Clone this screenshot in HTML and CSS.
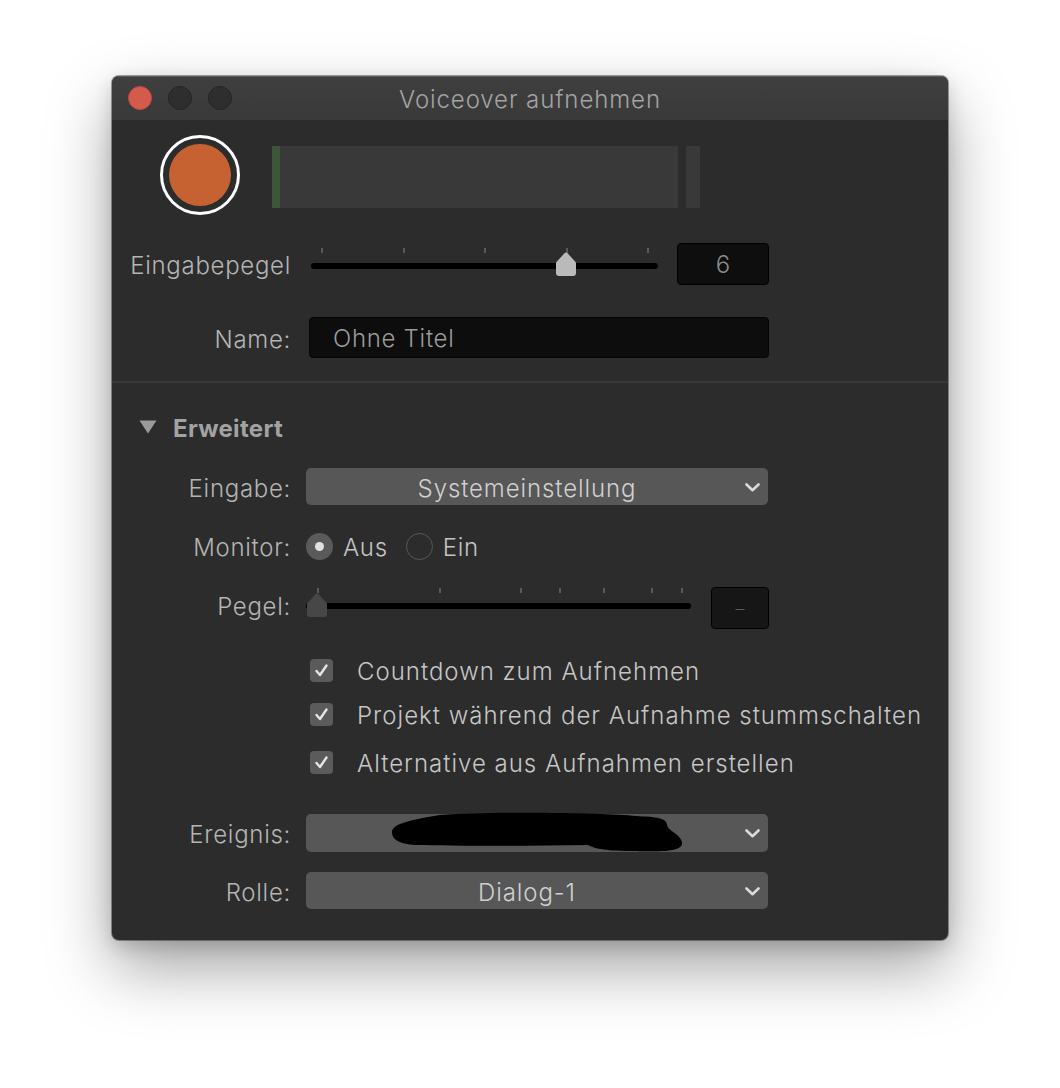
FILE: index.html
```html
<!DOCTYPE html>
<html lang="de">
<head>
<meta charset="utf-8">
<title>Voiceover aufnehmen</title>
<link rel="stylesheet" href="styles.css">
</head>
<body>
<div class="window">
  <div class="titlebar">
    <div class="lights">
      <span class="light red"></span>
      <span class="light"></span>
      <span class="light"></span>
    </div>
    <div class="title">Voiceover aufnehmen</div>
    <div class="lights-spacer"></div>
  </div>

  <div class="content">
    <div class="record-row">
      <div class="rec-ring"><div class="rec-dot"></div></div>
      <div class="meter">
        <div class="meter-main"><span class="meter-green"></span></div>
        <div class="meter-peak"></div>
      </div>
    </div>

    <div class="row row-gain">
      <div class="label">Eingabepegel</div>
      <div class="slider slider-gain">
        <span class="tick" style="left:10px"></span>
        <span class="tick" style="left:92px"></span>
        <span class="tick" style="left:173px"></span>
        <span class="tick" style="left:255px"></span>
        <span class="tick" style="left:336px"></span>
        <div class="track"></div>
        <svg class="thumb thumb-light" style="left:244px" width="22" height="24" viewBox="0 0 22 24"><path d="M1 10.5 L9.5 1.2 Q11 -0.2 12.5 1.2 L21 10.5 V21 Q21 24 18 24 H4 Q1 24 1 21 Z"/></svg>
      </div>
      <div class="valuebox valuebox-gain">6</div>
    </div>

    <div class="row row-name">
      <div class="label">Name:</div>
      <div class="textfield"><span class="tf-text">Ohne Titel</span></div>
    </div>

    <div class="separator"></div>

    <div class="disclosure">
      <svg class="tri" width="18" height="14" viewBox="0 0 18 14"><path d="M0.5 0.5 H17.5 L9 13.5 Z"/></svg>
      <span class="disclosure-text">Erweitert</span>
    </div>

    <div class="row row-select row-input">
      <div class="label">Eingabe:</div>
      <div class="select">
        <span class="select-text">Systemeinstellung</span>
        <svg class="chev" width="15" height="9" viewBox="0 0 15 9"><path d="M1.5 1.5 L7.5 7.2 L13.5 1.5"/></svg>
      </div>
    </div>

    <div class="row row-monitor">
      <div class="label">Monitor:</div>
      <div class="radios">
        <span class="radio on"><span class="radio-dot"></span></span>
        <span class="radio-label">Aus</span>
        <span class="radio off"></span>
        <span class="radio-label">Ein</span>
      </div>
    </div>

    <div class="row row-level">
      <div class="label">Pegel:</div>
      <div class="slider slider-level">
        <span class="tick" style="left:11px"></span>
        <span class="tick" style="left:133px"></span>
        <span class="tick" style="left:214px"></span>
        <span class="tick" style="left:253px"></span>
        <span class="tick" style="left:297px"></span>
        <span class="tick" style="left:345px"></span>
        <span class="tick" style="left:375px"></span>
        <div class="track"></div>
        <svg class="thumb thumb-dark" style="left:0px" width="22" height="24" viewBox="0 0 22 24"><path d="M1 10.5 L9.5 1.2 Q11 -0.2 12.5 1.2 L21 10.5 V21 Q21 24 18 24 H4 Q1 24 1 21 Z"/></svg>
      </div>
      <div class="valuebox valuebox-level">–</div>
    </div>

    <div class="checks">
      <div class="check-row">
        <span class="checkbox"><svg width="23" height="23" viewBox="0 0 23 23"><path d="M6.5 12 L10 16 L16.5 6.5"/></svg></span>
        <span class="check-label">Countdown zum Aufnehmen</span>
      </div>
      <div class="check-row">
        <span class="checkbox"><svg width="23" height="23" viewBox="0 0 23 23"><path d="M6.5 12 L10 16 L16.5 6.5"/></svg></span>
        <span class="check-label">Projekt während der Aufnahme stummschalten</span>
      </div>
      <div class="check-row">
        <span class="checkbox"><svg width="23" height="23" viewBox="0 0 23 23"><path d="M6.5 12 L10 16 L16.5 6.5"/></svg></span>
        <span class="check-label">Alternative aus Aufnahmen erstellen</span>
      </div>
    </div>

    <div class="row row-select row-event">
      <div class="label">Ereignis:</div>
      <div class="select">
        <svg class="scribble" width="380" height="42" viewBox="0 -2 380 42"><path d="M86 19 C86 10 110 6 134 2 C200 -2 300 0 330 3 C350 4 361 5 361 12 C362 18 376 22 376 30 C376 38 360 39 330 38 C300 38 290 36 282 32 C220 33 150 33 110 32 C92 31 86 26 86 19 Z"/></svg>
        <svg class="chev" width="15" height="9" viewBox="0 0 15 9"><path d="M1.5 1.5 L7.5 7.2 L13.5 1.5"/></svg>
      </div>
    </div>

    <div class="row row-select row-role">
      <div class="label">Rolle:</div>
      <div class="select">
        <span class="select-text">Dialog-1</span>
        <svg class="chev" width="15" height="9" viewBox="0 0 15 9"><path d="M1.5 1.5 L7.5 7.2 L13.5 1.5"/></svg>
      </div>
    </div>
  </div>
</div>
</body>
</html>
```

FILE: styles.css
```css
* { box-sizing: border-box; }

html, body {
  margin: 0;
  padding: 0;
  background: #ffffff;
}

body {
  font-family: "Inter", "Noto Sans", sans-serif;
  font-weight: 300;
  width: 1060px;
  height: 1088px;
  overflow: hidden;
  padding-top: 76px;
  padding-left: 112px;
}

.window {
  width: 836px;
  height: 864px;
  background: #2c2c2c;
  border-radius: 7px;
  overflow: hidden;
  box-shadow: 0 0 0 1px rgba(0,0,0,0.35), 0 28px 64px rgba(0,0,0,0.36), 0 6px 18px rgba(0,0,0,0.16);
}

/* Title bar */
.titlebar {
  height: 44px;
  display: flex;
  align-items: center;
  background: linear-gradient(#3f3f3f, #393939);
  box-shadow: inset 0 1px 0 rgba(255,255,255,0.14);
}

.lights, .lights-spacer {
  width: 130px;
  flex: 0 0 130px;
}

.lights {
  display: flex;
  gap: 16px;
  padding-left: 16px;
}

.light {
  width: 24px;
  height: 24px;
  border-radius: 50%;
  background: #2e2e2e;
  border: 1px solid #242424;
}

.light.red {
  background: #d45a4c;
  border-color: #b94a3e;
}

.title {
  flex: 1;
  text-align: center;
  color: #a3a3a3;
  font-size: 24px;
  letter-spacing: 0.9px;
  padding-top: 2px;
}

/* Content */
.content {
  display: flex;
  flex-direction: column;
}

.record-row {
  display: flex;
  align-items: flex-start;
  margin-top: 15px;
  padding-left: 48px;
  height: 80px;
}

.rec-ring {
  width: 80px;
  height: 80px;
  border-radius: 50%;
  border: 3px solid #ffffff;
  padding: 6px;
}

.rec-dot {
  width: 62px;
  height: 62px;
  border-radius: 50%;
  background: #c66131;
}

.meter {
  display: flex;
  gap: 8px;
  margin-left: 32px;
  margin-top: 11px;
}

.meter-main {
  width: 406px;
  height: 62px;
  background: #393939;
  display: flex;
}

.meter-green {
  width: 8px;
  height: 100%;
  background: #3d5639;
}

.meter-peak {
  width: 14px;
  height: 62px;
  background: #393939;
}

/* Rows */
.row {
  display: flex;
  align-items: center;
}

.label {
  width: 179px;
  flex: 0 0 179px;
  text-align: right;
  color: #b4b4b4;
  font-size: 24px;
  letter-spacing: 0.7px;
  padding-top: 3px;
}

.row-gain {
  margin-top: 28px;
  height: 42px;
}

.slider {
  position: relative;
  height: 42px;
}

.slider .track {
  position: absolute;
  left: 0;
  right: 0;
  top: 20px;
  height: 6px;
  border-radius: 3px;
  background: #000000;
}

.tick {
  position: absolute;
  top: 5px;
  width: 2px;
  height: 5px;
  background: #5a5a5a;
}

.thumb {
  position: absolute;
  top: 9px;
}

.thumb-light path { fill: #bababa; }
.thumb-dark path { fill: #474747; }

.slider-gain {
  width: 347px;
  margin-left: 20px;
}

.valuebox {
  background: #0e0e0e;
  border: 1px solid #000;
  border-radius: 4px;
  height: 42px;
  display: flex;
  align-items: center;
  justify-content: center;
  color: #8a8a8a;
  font-size: 24px;
}

.valuebox-gain {
  width: 92px;
  margin-left: 19px;
}

.row-name {
  margin-top: 32px;
  height: 41px;
}

.textfield {
  margin-left: 18px;
  width: 460px;
  height: 41px;
  background: #0d0d0d;
  border: 1px solid #050505;
  border-radius: 4px;
  color: #9b9b9b;
  font-size: 24px;
  letter-spacing: 0.7px;
  display: flex;
  align-items: center;
  padding-left: 23px;
}

.tf-text { padding-top: 2px; }

.separator {
  margin-top: 23px;
  height: 2px;
  background: #383838;
}

.disclosure {
  margin-top: 32px;
  height: 24px;
  display: flex;
  align-items: center;
  padding-left: 27px;
}

.tri path { fill: #9a9a9a; }

.disclosure-text {
  margin-left: 16px;
  color: #a2a2a2;
  font-size: 24px;
  font-weight: 700;
  letter-spacing: 0.3px;
  padding-top: 2px;
}

.row-select .select {
  margin-left: 15px;
  width: 462px;
  height: 37px;
  background: #575757;
  border-radius: 5px;
  position: relative;
  display: flex;
  align-items: center;
  justify-content: center;
  padding-right: 20px;
}

.select-text {
  color: #d0d0d0;
  font-size: 24px;
  letter-spacing: 0.9px;
  padding-top: 3px;
}

.chev {
  position: absolute;
  right: 8px;
  top: 15px;
}

.chev path {
  fill: none;
  stroke: #dadada;
  stroke-width: 2.6;
  stroke-linecap: round;
  stroke-linejoin: round;
}

.scribble {
  position: absolute;
  left: 0;
  top: -3px;
}

.scribble path { fill: #000; }

.row-input {
  margin-top: 29px;
}

.row-monitor {
  margin-top: 27px;
  height: 28px;
}

.radios {
  margin-left: 15px;
  display: flex;
  align-items: center;
}

.radio {
  width: 27px;
  height: 27px;
  border-radius: 50%;
  display: flex;
  align-items: center;
  justify-content: center;
}

.radio.on {
  background: #5a5a5a;
}

.radio-dot {
  width: 9px;
  height: 9px;
  border-radius: 50%;
  background: #e0e0e0;
}

.radio.off {
  border: 1.5px solid #585858;
  margin-left: 18px;
}

.radio-label {
  margin-left: 10px;
  color: #c4c4c4;
  font-size: 24px;
  letter-spacing: 0.7px;
  padding-top: 3px;
}

.row-level {
  margin-top: 27px;
  height: 42px;
}

.row-level .label {
  padding-top: 0;
  margin-top: -4px;
}

.slider-level {
  width: 385px;
  margin-left: 15px;
}

.slider-level .track {
  top: 16px;
  height: 6px;
}

.slider-level .tick {
  top: 1px;
}

.slider-level .thumb {
  top: 6px;
}

.valuebox-level {
  width: 58px;
  margin-left: 20px;
  background: #161616;
  color: #5a5a5a;
  font-size: 18px;
}

.checks {
  margin-top: 26px;
  padding-left: 198px;
  display: flex;
  flex-direction: column;
  gap: 14px;
}

.check-row {
  display: flex;
  align-items: center;
  height: 30px;
}

.check-row + .check-row + .check-row {
  margin-top: 4px;
}

.checkbox {
  width: 23px;
  height: 23px;
  border-radius: 4px;
  background: #5b5b5b;
  display: flex;
}

.checkbox path {
  fill: none;
  stroke: #e6e6e6;
  stroke-width: 2.4;
  stroke-linecap: round;
  stroke-linejoin: round;
}

.check-label {
  margin-left: 24px;
  color: #c6c6c6;
  font-size: 24px;
  letter-spacing: 1px;
  padding-top: 3px;
}

.row-event {
  margin-top: 37px;
}

.row-event .select { height: 38px; }

.row-role {
  margin-top: 20px;
}
```
